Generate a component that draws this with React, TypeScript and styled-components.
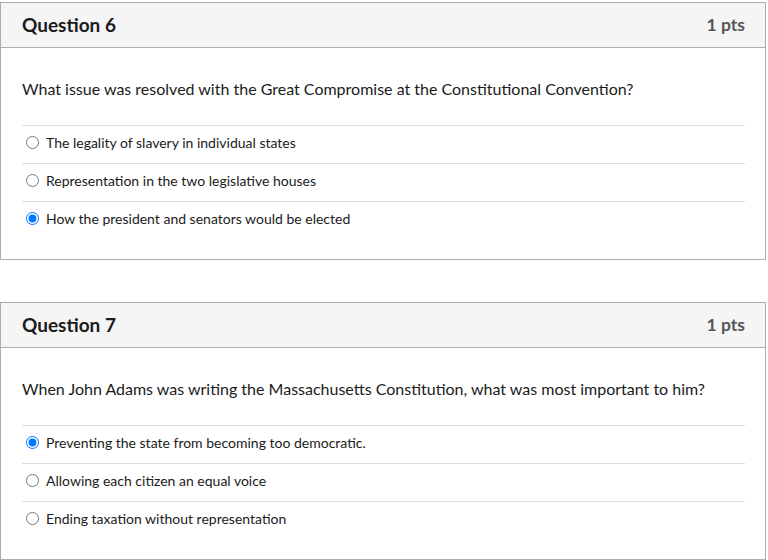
import React from 'react';
import styled, { createGlobalStyle } from 'styled-components';

const GlobalStyle = createGlobalStyle`
    body {
        margin: 0;
        padding-top: 2px;
        background: #fff;
        font-family: Lato, "Open Sans", sans-serif;
        color: #2d3b45;
    }
`

const Page = styled.div`
    width: 766px;
    display: flex;
    flex-direction: column;
    row-gap: 42px;
`

const Card = styled.section`
    border: 1px solid #adadad;
    background: #fff;
`

const Header = styled.header`
    display: flex;
    justify-content: space-between;
    align-items: center;
    box-sizing: border-box;
    height: 45px;
    padding: 0 20px 2px 21px;
    background: #f5f5f5;
    border-bottom: 1px solid #adadad;
`

const Title = styled.h2`
    margin: 0;
    font-size: 19px;
    font-weight: 700;
    color: #1b1b1b;
`

const Points = styled.span`
    font-size: 17.5px;
    font-weight: 700;
    color: #555;
`

const Body = styled.div`
    padding: 31px 20px 20px 21px;
`

const QuestionText = styled.p`
    margin: 0 0 26px;
    font-size: 16px;
    line-height: 20px;
    color: #1b1b1b;
`

const Answers = styled.div`
    display: flex;
    flex-direction: column;
`

const Answer = styled.label`
    display: flex;
    align-items: center;
    box-sizing: border-box;
    height: 38px;
    padding-bottom: 5px;
    border-top: 1px solid #dcdcdc;
    font-size: 14px;
    color: #1b1b1b;

    input {
        margin: 0 7px 0 4px;
        width: 13px;
        height: 13px;
    }
`

type Question = {
    id: number;
    text: string;
    answers: string[];
    selected: number;
};

const questions: Question[] = [
    {
        id: 6,
        text: 'What issue was resolved with the Great Compromise at the Constitutional Convention?',
        answers: [
            'The legality of slavery in individual states',
            'Representation in the two legislative houses',
            'How the president and senators would be elected',
        ],
        selected: 2,
    },
    {
        id: 7,
        text: 'When John Adams was writing the Massachusetts Constitution, what was most important to him?',
        answers: [
            'Preventing the state from becoming too democratic.',
            'Allowing each citizen an equal voice',
            'Ending taxation without representation',
        ],
        selected: 0,
    },
];

const QuestionCard = ({ question }: { question: Question }) => (
    <Card>
        <Header>
            <Title>Question {question.id}</Title>
            <Points>1 pts</Points>
        </Header>
        <Body>
            <QuestionText>{question.text}</QuestionText>
            <Answers>
                {question.answers.map((answer, i) => (
                    <Answer key={answer}>
                        <input
                            type="radio"
                            name={`q${question.id}`}
                            defaultChecked={i === question.selected}
                        />
                        {answer}
                    </Answer>
                ))}
            </Answers>
        </Body>
    </Card>
)

export default function App() {
    return (
        <>
            <GlobalStyle />
            <Page>
                {questions.map(q => (
                    <QuestionCard key={q.id} question={q} />
                ))}
            </Page>
        </>
    )
}
